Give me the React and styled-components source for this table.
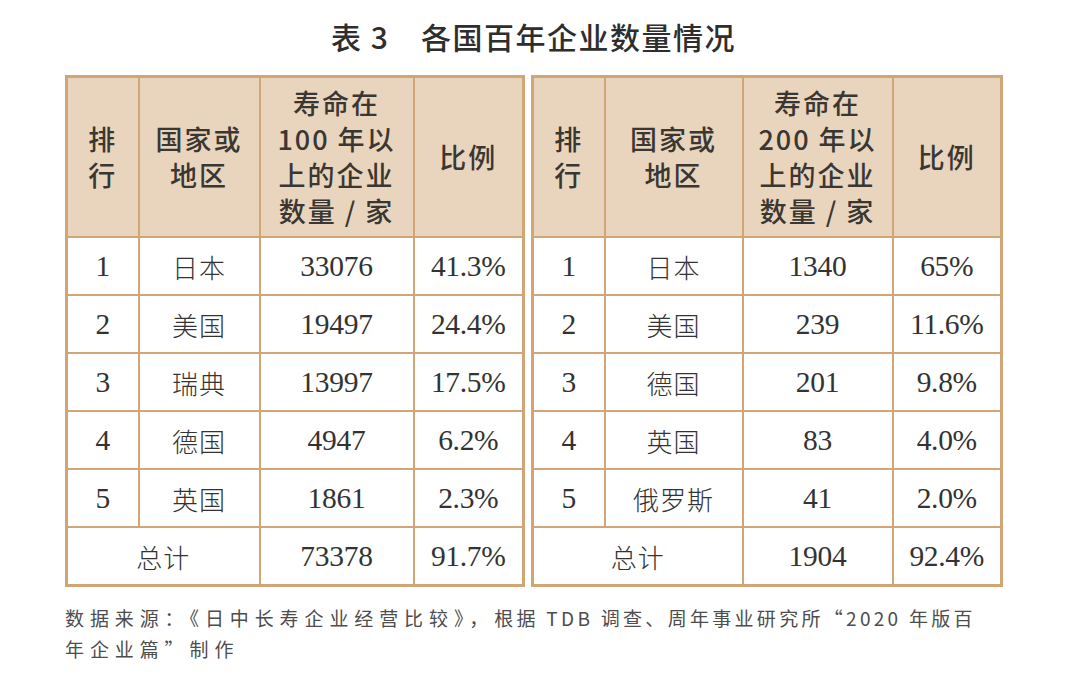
import React from 'react';
import styled, { createGlobalStyle } from 'styled-components';

const GlobalStyle = createGlobalStyle`
  html, body {
    margin: 0;
    padding: 0;
    background: #ffffff;
  }
`;

const Page = styled.div`
  width: 1080px;
  height: 691px;
  box-sizing: border-box;
  padding: 17px 0 0 65px;
  font-family: "Noto Sans CJK SC", sans-serif;
  color: #333;
`;

const Title = styled.h1`
  width: 937px;
  margin: 0 0 20px;
  text-align: center;
  font-size: 30px;
  line-height: 38px;
  font-weight: 500;
  letter-spacing: 1.5px;
  color: #2e2e2e;
`;

const Tables = styled.div`
  display: flex;
  gap: 6px;
  align-items: flex-start;
`;

const Table = styled.table`
  width: ${p => p.$width}px;
  border-collapse: collapse;
  border: 3px solid #d2a577;
  table-layout: fixed;
`;

const HeadCell = styled.th`
  background: #e9d4bd;
  border: 2px solid #d2a577;
  height: 158px;
  padding: 0;
  font-size: 27px;
  line-height: 36px;
  font-weight: 500;
  letter-spacing: 2px;
  color: #3a3733;
  text-align: center;
  vertical-align: middle;
`;

const Cell = styled.td`
  border: 2px solid #d2a577;
  height: 56px;
  padding: 0;
  text-align: center;
  vertical-align: middle;
  color: #333;
  font-family: ${p => p.$cjk
    ? '"Noto Sans CJK SC", sans-serif'
    : '"Liberation Serif", "Times New Roman", "DejaVu Serif", serif'};
  font-size: ${p => p.$cjk ? '26px' : '29.5px'};
  font-weight: ${p => p.$cjk ? 300 : 400};
  letter-spacing: ${p => p.$cjk ? '1px' : '-0.3px'};
`;

const Note = styled.p`
  margin: 15px 0 0;
  font-size: 19px;
  line-height: 31px;
  letter-spacing: 5.9px;
  color: #4d4d4d;
`;

const Tight = styled.span`
  letter-spacing: 3.3px;
`;

const left = {
  width: 457,
  cols: [72, 121, 154, 110],
  head: ['排\n行', '国家或\n地区', '寿命在\n100 年以\n上的企业\n数量 / 家', '比例'],
  rows: [
    ['1', '日本', '33076', '41.3%'],
    ['2', '美国', '19497', '24.4%'],
    ['3', '瑞典', '13997', '17.5%'],
    ['4', '德国', '4947', '6.2%'],
    ['5', '英国', '1861', '2.3%'],
  ],
  total: ['73378', '91.7%'],
};

const right = {
  width: 469,
  cols: [72, 138, 150, 109],
  head: ['排\n行', '国家或\n地区', '寿命在\n200 年以\n上的企业\n数量 / 家', '比例'],
  rows: [
    ['1', '日本', '1340', '65%'],
    ['2', '美国', '239', '11.6%'],
    ['3', '德国', '201', '9.8%'],
    ['4', '英国', '83', '4.0%'],
    ['5', '俄罗斯', '41', '2.0%'],
  ],
  total: ['1904', '92.4%'],
};

function lines(text) {
  return text.split('\n').map((l, i) => <div key={i}>{l}</div>);
}

function DataTable({ data }) {
  return (
    <Table $width={data.width}>
      <colgroup>
        {data.cols.map((w, i) => <col key={i} style={{ width: w }} />)}
      </colgroup>
      <thead>
        <tr>
          {data.head.map((h, i) => <HeadCell key={i}>{lines(h)}</HeadCell>)}
        </tr>
      </thead>
      <tbody>
        {data.rows.map(r => (
          <tr key={r[0]}>
            <Cell>{r[0]}</Cell>
            <Cell $cjk>{r[1]}</Cell>
            <Cell>{r[2]}</Cell>
            <Cell>{r[3]}</Cell>
          </tr>
        ))}
        <tr>
          <Cell $cjk colSpan={2}>总计</Cell>
          <Cell>{data.total[0]}</Cell>
          <Cell>{data.total[1]}</Cell>
        </tr>
      </tbody>
    </Table>
  );
}

export default function App() {
  return (
    <>
      <GlobalStyle />
      <Page>
        <Title>表 3{'\u3000'}各国百年企业数量情况</Title>
        <Tables>
          <DataTable data={left} />
          <DataTable data={right} />
        </Tables>
        <Note>
          数据来源：《日中长寿企业经营比较》，<Tight>根据 TDB 调查、周年事业研究所“2020 年版百</Tight>
          <br />
          年企业篇”制作
        </Note>
      </Page>
    </>
  );
}
